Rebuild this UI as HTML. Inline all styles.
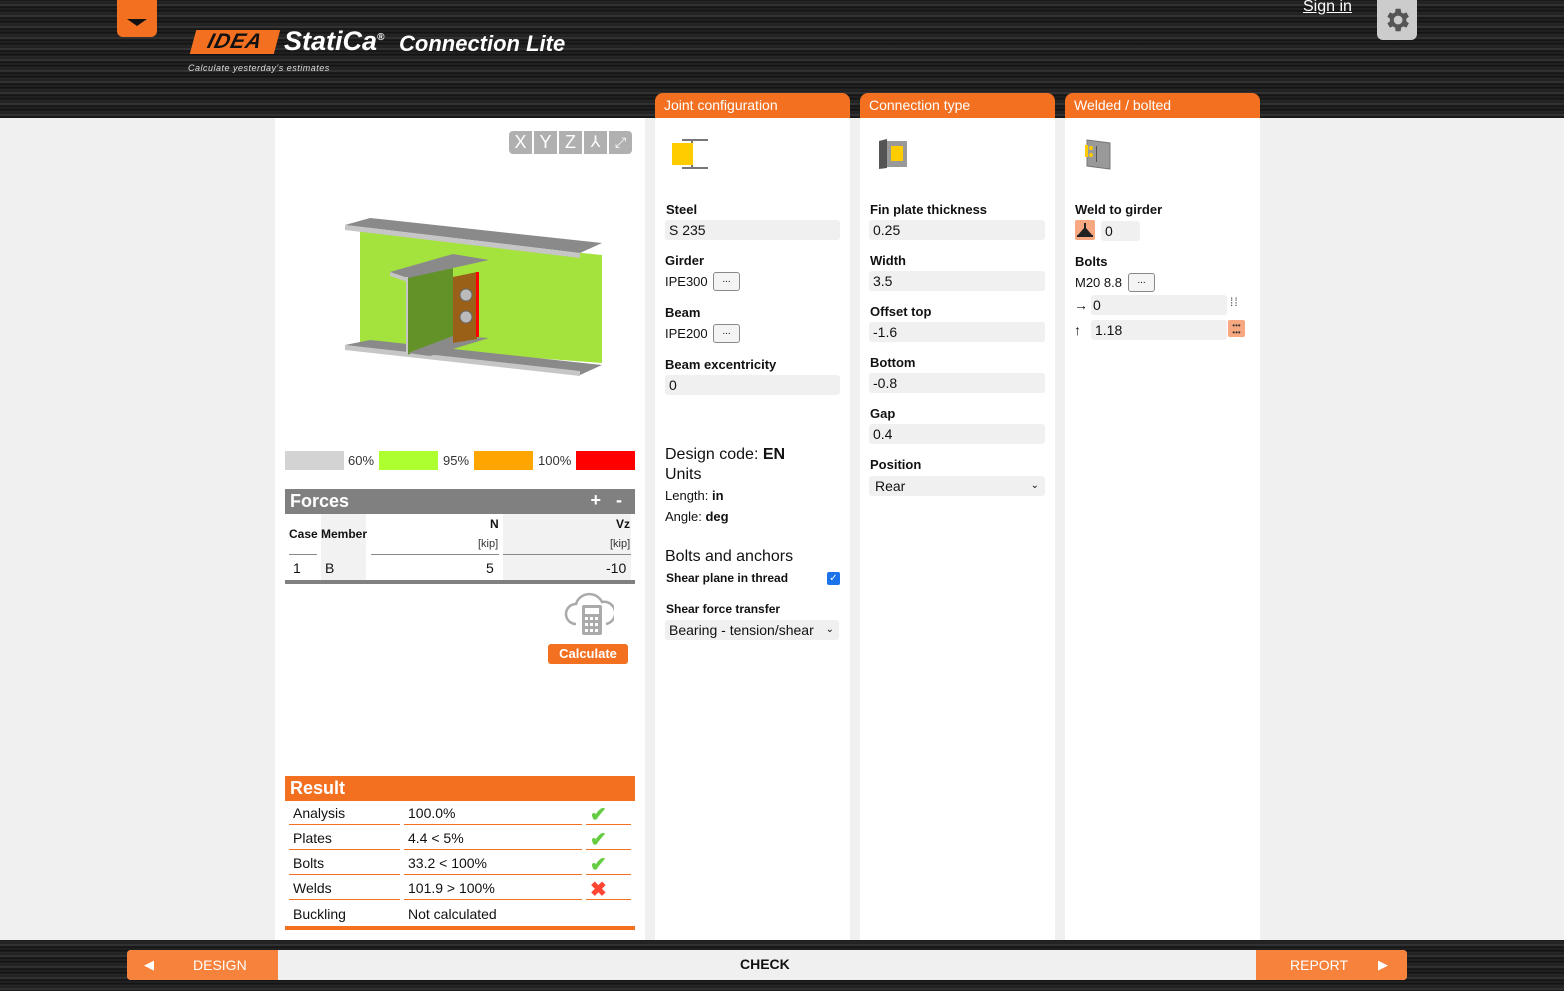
<!DOCTYPE html>
<html><head><meta charset="utf-8">
<style>
*{box-sizing:border-box;margin:0;padding:0}
body{width:1564px;height:991px;overflow:hidden;background:#f0f0f0;font-family:"Liberation Sans",Arial,sans-serif;color:#111;position:relative}
.dark{position:absolute;left:0;width:1564px;background:repeating-linear-gradient(180deg,#161616 0px,#2c2c2c 2px,#1a1a1a 3px,#3a3a3a 5px,#111 7px,#262626 9px,#0e0e0e 11px)}
.abs{position:absolute}
.panel{position:absolute;background:#fff;top:118px;height:822px}
.tab{position:absolute;top:93px;height:25px;background:#f37021;color:#fff;font-size:14px;padding:4px 9px;border-radius:8px 8px 0 0}
.lbl{position:absolute;font-size:13px;font-weight:bold}
.inp{position:absolute;background:#f0f0f0;height:20px;font-size:14px;padding:2px 4px;border-radius:3px}
.btn{position:absolute;width:27px;height:19px;border:1px solid #888;border-radius:3px;background:#f4f4f4;font-size:10px;text-align:center;line-height:14px}
.t{position:absolute;font-size:14px}
</style></head><body>
<div class="dark" style="top:0;height:118px"></div>
<div class="dark" style="top:940px;height:51px"></div>
<div class="abs" style="left:117px;top:0;width:40px;height:37px;background:#f37021;border-radius:0 0 6px 6px"></div>
<div class="abs" style="left:127px;top:19px;width:0;height:0;border-left:10px solid transparent;border-right:10px solid transparent;border-top:7px solid #111"></div>
<div class="abs" style="left:193px;top:30px;width:84px;height:24px;background:#f37021;transform:skewX(-15deg);color:#111;font:italic bold 21px 'Liberation Sans';line-height:24px;text-align:center;letter-spacing:1px">IDEA</div>
<div class="abs" style="left:284px;top:26px;color:#fff;font:italic bold 27px 'Liberation Sans'">StatiCa<sup style="font-size:10px">®</sup></div>
<div class="abs" style="left:399px;top:31px;color:#fff;font:italic bold 22px 'Liberation Sans'">Connection Lite</div>
<div class="abs" style="left:188px;top:63px;color:#ddd;font:italic 9px 'Liberation Sans';letter-spacing:.5px">Calculate yesterday's estimates</div>
<div class="abs" style="left:1303px;top:-2px;color:#fff;font-size:16px;text-decoration:underline">Sign in</div>
<div class="abs" style="left:1377px;top:0;width:40px;height:40px;background:#ccc;border-radius:0 0 6px 6px"></div>
<svg class="abs" style="left:1382px;top:5px" width="30" height="30" viewBox="0 0 24 24"><path fill="#555" d="M19.4 13a7.5 7.5 0 000-2l2.1-1.6-2-3.5-2.5 1a7 7 0 00-1.7-1L14.9 3h-4l-.4 2.9a7 7 0 00-1.7 1l-2.5-1-2 3.5L6.4 11a7.5 7.5 0 000 2l-2.1 1.6 2 3.5 2.5-1a7 7 0 001.7 1l.4 2.9h4l.4-2.9a7 7 0 001.7-1l2.5 1 2-3.5zM12.9 15.5a3.5 3.5 0 110-7 3.5 3.5 0 010 7z"/></svg>

<div class="panel" style="left:275px;width:370px"></div>
<div class="panel" style="left:655px;width:195px"></div>
<div class="panel" style="left:860px;width:195px"></div>
<div class="panel" style="left:1065px;width:195px"></div>
<div class="tab" style="left:655px;width:195px">Joint configuration</div>
<div class="tab" style="left:860px;width:195px">Connection type</div>
<div class="tab" style="left:1065px;width:195px">Welded / bolted</div>

<div class="abs" style="left:509px;top:131px;display:flex;gap:2px">
<div style="width:23px;height:23px;background:#b0b0b0;color:#fff;font-size:18px;text-align:center;line-height:23px;border-radius:4px 0 0 4px">X</div>
<div style="width:23px;height:23px;background:#b0b0b0;color:#fff;font-size:18px;text-align:center;line-height:23px">Y</div>
<div style="width:23px;height:23px;background:#b0b0b0;color:#fff;font-size:18px;text-align:center;line-height:23px">Z</div>
<div style="width:23px;height:23px;background:#b0b0b0;color:#fff;font-size:16px;text-align:center;line-height:23px">⅄</div>
<div style="width:23px;height:23px;background:#b0b0b0;color:#fff;font-size:14px;text-align:center;line-height:23px;border-radius:0 4px 4px 0">⤢</div>
</div>
<svg class="abs" style="left:340px;top:215px" width="270" height="165" viewBox="0 0 270 165">
<polygon points="20,16 262,40 262,148 20,130" fill="#a4e23e"/>
<polygon points="5,10 30,3 262,28 240,38" fill="#8a8a8a"/>
<polygon points="5,10 240,38 240,43 5,15" fill="#c6c6c6"/>
<polygon points="5,130 30,125 262,150 240,160" fill="#8a8a8a"/>
<polygon points="5,130 240,156 240,161 5,135" fill="#c6c6c6"/>
<polygon points="67,60 67,140 113,123 113,53" fill="#639328"/>
<polygon points="68,138 113,121 149,123 90,141" fill="#8a8a8a"/>
<polygon points="50,57 113,39 149,45 68,63" fill="#8a8a8a"/>
<polygon points="50,57 68,63 68,67 50,61" fill="#c6c6c6"/>
<rect x="66" y="62" width="2" height="78" fill="#c6c6c6"/>
<polygon points="113,62 137,57 137,124 113,128" fill="#9a6018"/>
<rect x="136" y="57" width="3" height="65" fill="#f00"/>
<circle cx="126" cy="80" r="6" fill="#bbb" stroke="#666"/>
<circle cx="126" cy="102" r="6" fill="#bbb" stroke="#666"/>
</svg>
<div class="abs" style="left:285px;top:451px;width:59px;height:19px;background:#d3d3d3"></div>
<div class="t" style="left:348px;top:453px;font-size:13px;color:#333">60%</div>
<div class="abs" style="left:379px;top:451px;width:59px;height:19px;background:#adff2f"></div>
<div class="t" style="left:443px;top:453px;font-size:13px;color:#333">95%</div>
<div class="abs" style="left:474px;top:451px;width:59px;height:19px;background:#ffa500"></div>
<div class="t" style="left:538px;top:453px;font-size:13px;color:#333">100%</div>
<div class="abs" style="left:576px;top:451px;width:59px;height:19px;background:#f00"></div>

<div class="abs" style="left:285px;top:489px;width:350px;height:25px;background:#808080;color:#fff;font-weight:bold;font-size:18px;padding:2px 5px">Forces<span style="position:absolute;right:13px;top:1px">+ &nbsp;&nbsp;-</span></div>
<div class="abs" style="left:321px;top:514px;width:45px;height:66px;background:#f2f2f2"></div>
<div class="abs" style="left:503px;top:514px;width:128px;height:66px;background:#f2f2f2"></div>
<div class="lbl" style="left:289px;top:527px;font-size:12px">Case</div>
<div class="lbl" style="left:321px;top:527px;font-size:12px">Member</div>
<div class="lbl" style="left:490px;top:517px;font-size:12px">N</div>
<div class="t" style="left:478px;top:538px;font-size:11px;color:#333">[kip]</div>
<div class="lbl" style="left:616px;top:517px;font-size:12px">Vz</div>
<div class="t" style="left:610px;top:538px;font-size:11px;color:#333">[kip]</div>
<div class="abs" style="left:289px;top:554px;width:28px;height:1px;background:#888"></div>
<div class="abs" style="left:371px;top:554px;width:128px;height:1px;background:#888"></div>
<div class="abs" style="left:503px;top:554px;width:128px;height:1px;background:#888"></div>
<div class="t" style="left:293px;top:560px">1</div>
<div class="t" style="left:325px;top:560px">B</div>
<div class="t" style="left:486px;top:560px">5</div>
<div class="t" style="left:606px;top:560px">-10</div>
<div class="abs" style="left:285px;top:580px;width:350px;height:4px;background:#808080"></div>
<svg class="abs" style="left:562px;top:592px" width="52" height="45" viewBox="0 0 52 45"><path d="M14 32a10 10 0 010-20 14 14 0 0126-2 10 10 0 014 22" fill="none" stroke="#aaa" stroke-width="2.5"/><rect x="20" y="13" width="20" height="30" rx="2" fill="#aaa"/><rect x="23" y="16" width="14" height="6" fill="#fff"/><g fill="#fff"><rect x="23" y="25" width="3" height="3"/><rect x="28" y="25" width="3" height="3"/><rect x="33" y="25" width="3" height="3"/><rect x="23" y="31" width="3" height="3"/><rect x="28" y="31" width="3" height="3"/><rect x="33" y="31" width="3" height="3"/><rect x="23" y="37" width="3" height="3"/><rect x="28" y="37" width="3" height="3"/><rect x="33" y="37" width="3" height="3"/></g></svg>
<div class="abs" style="left:548px;top:644px;width:80px;height:20px;background:#f37021;color:#fff;font-weight:bold;font-size:13px;text-align:center;line-height:20px;border-radius:3px">Calculate</div>

<div class="abs" style="left:285px;top:776px;width:350px;height:25px;background:#f37021;color:#fff;font-weight:bold;font-size:18px;padding:2px 5px">Result</div>
<div class="t" style="left:293px;top:805px">Analysis</div><div class="t" style="left:408px;top:805px">100.0%</div>
<div class="t" style="left:293px;top:830px">Plates</div><div class="t" style="left:408px;top:830px">4.4 &lt; 5%</div>
<div class="t" style="left:293px;top:855px">Bolts</div><div class="t" style="left:408px;top:855px">33.2 &lt; 100%</div>
<div class="t" style="left:293px;top:880px">Welds</div><div class="t" style="left:408px;top:880px">101.9 &gt; 100%</div>
<div class="t" style="left:293px;top:906px">Buckling</div><div class="t" style="left:408px;top:906px">Not calculated</div>
<div class="abs" style="left:289px;top:824px;width:111px;height:1px;background:#f37021;box-shadow:0 25px 0 #f37021,0 50px 0 #f37021,0 75px 0 #f37021"></div>
<div class="abs" style="left:404px;top:824px;width:178px;height:1px;background:#f37021;box-shadow:0 25px 0 #f37021,0 50px 0 #f37021,0 75px 0 #f37021"></div>
<div class="abs" style="left:586px;top:824px;width:45px;height:1px;background:#f37021;box-shadow:0 25px 0 #f37021,0 50px 0 #f37021,0 75px 0 #f37021"></div>
<div class="t" style="left:590px;top:802px;color:#6c4;font-size:20px;font-weight:bold">✔</div>
<div class="t" style="left:590px;top:827px;color:#6c4;font-size:20px;font-weight:bold">✔</div>
<div class="t" style="left:590px;top:852px;color:#6c4;font-size:20px;font-weight:bold">✔</div>
<div class="t" style="left:590px;top:877px;color:#f43;font-size:20px;font-weight:bold">✖</div>
<div class="abs" style="left:285px;top:926px;width:350px;height:4px;background:#f37021"></div>

<svg class="abs" style="left:672px;top:139px" width="36" height="31"><rect x="10" y="0" width="26" height="2" fill="#777"/><rect x="10" y="28" width="26" height="2" fill="#777"/><rect x="19" y="0" width="2" height="30" fill="#777"/><rect x="0" y="4" width="21" height="22" fill="#fc0"/></svg>
<div class="lbl" style="left:666px;top:202px">Steel</div>
<div class="inp" style="left:665px;top:220px;width:175px">S 235</div>
<div class="lbl" style="left:665px;top:253px">Girder</div>
<div class="t" style="left:665px;top:274px;font-size:13px">IPE300</div><div class="btn" style="left:713px;top:272px">...</div>
<div class="lbl" style="left:665px;top:305px">Beam</div>
<div class="t" style="left:665px;top:326px;font-size:13px">IPE200</div><div class="btn" style="left:713px;top:324px">...</div>
<div class="lbl" style="left:665px;top:357px">Beam excentricity</div>
<div class="inp" style="left:665px;top:375px;width:175px">0</div>
<div class="t" style="left:665px;top:446px;font-size:16px">Design code: <b>EN</b></div>
<div class="t" style="left:665px;top:466px;font-size:16px">Units</div>
<div class="t" style="left:665px;top:488px;font-size:13px">Length: <b>in</b></div>
<div class="t" style="left:665px;top:509px;font-size:13px">Angle: <b>deg</b></div>
<div class="t" style="left:665px;top:548px;font-size:16px">Bolts and anchors</div>
<div class="lbl" style="left:666px;top:571px;font-size:12px">Shear plane in thread</div>
<div class="abs" style="left:827px;top:572px;width:13px;height:13px;background:#1a73e8;border-radius:2px;color:#fff;font-size:10px;text-align:center;line-height:13px">✓</div>
<div class="lbl" style="left:666px;top:602px;font-size:12px">Shear force transfer</div>
<div class="inp" style="left:665px;top:620px;width:174px;font-size:14px">Bearing - tension/shear<span style="position:absolute;right:5px;font-size:10px;top:4px">⌄</span></div>

<svg class="abs" style="left:879px;top:138px" width="32" height="32"><polygon points="0,3 8,1 8,30 0,31" fill="#555"/><rect x="8" y="3" width="20" height="26" fill="#999"/><rect x="12" y="8" width="12" height="15" fill="#fc0"/></svg>
<div class="lbl" style="left:870px;top:202px">Fin plate thickness</div>
<div class="inp" style="left:869px;top:220px;width:176px">0.25</div>
<div class="lbl" style="left:870px;top:253px">Width</div>
<div class="inp" style="left:869px;top:271px;width:176px">3.5</div>
<div class="lbl" style="left:870px;top:304px">Offset top</div>
<div class="inp" style="left:869px;top:322px;width:176px">-1.6</div>
<div class="lbl" style="left:870px;top:355px">Bottom</div>
<div class="inp" style="left:869px;top:373px;width:176px">-0.8</div>
<div class="lbl" style="left:870px;top:406px">Gap</div>
<div class="inp" style="left:869px;top:424px;width:176px">0.4</div>
<div class="lbl" style="left:870px;top:457px">Position</div>
<div class="inp" style="left:869px;top:476px;width:176px;padding-left:6px">Rear<span style="position:absolute;right:6px;font-size:10px;top:4px">⌄</span></div>

<svg class="abs" style="left:1084px;top:138px" width="30" height="32"><polygon points="3,2 26,5 26,31 3,28" fill="#999" stroke="#777"/><rect x="1" y="7" width="3" height="12" fill="#fc0"/><circle cx="7" cy="10" r="2" fill="#fc0"/><circle cx="7" cy="17" r="2" fill="#fc0"/><rect x="12" y="8" width="1" height="16" fill="#555"/></svg>
<div class="lbl" style="left:1075px;top:202px">Weld to girder</div>
<div class="abs" style="left:1075px;top:220px;width:20px;height:20px;background:#f8a880;border-radius:2px"></div>
<svg class="abs" style="left:1075px;top:220px" width="20" height="20"><rect x="9" y="3" width="2" height="12" fill="#222"/><polygon points="3,15 9,8 9,15" fill="#222"/><polygon points="11,8 17,15 11,15" fill="#222"/><rect x="2" y="15" width="16" height="2" fill="#222"/></svg>
<div class="inp" style="left:1101px;top:221px;width:39px">0</div>
<div class="lbl" style="left:1075px;top:254px">Bolts</div>
<div class="t" style="left:1075px;top:275px;font-size:13px">M20 8.8</div><div class="btn" style="left:1128px;top:273px">...</div>
<div class="t" style="left:1074px;top:297px">→</div>
<div class="inp" style="left:1091px;top:295px;width:136px;padding-left:2px">0</div>
<div class="t" style="left:1230px;top:296px;font-size:12px;letter-spacing:1px;color:#444;line-height:12px">⁞⁞</div>
<div class="t" style="left:1074px;top:322px">↑</div>
<div class="inp" style="left:1091px;top:320px;width:136px">1.18</div>
<div class="abs" style="left:1228px;top:320px;width:17px;height:17px;background:#f8a880;border-radius:2px;font-size:8px;text-align:center;line-height:7px;padding-top:2px;color:#333">•••<br>•••</div>

<div class="abs" style="left:127px;top:950px;width:1280px;height:30px;background:#f0f0f0;border-radius:4px"></div>
<div class="abs" style="left:127px;top:950px;width:151px;height:30px;background:#f6823b;border-radius:4px 0 0 4px;color:#fff;font-size:14px;line-height:30px"><span style="position:absolute;left:17px;font-size:13px">◀</span><span style="position:absolute;left:66px">DESIGN</span></div>
<div class="abs" style="left:1256px;top:950px;width:151px;height:30px;background:#f6823b;border-radius:0 4px 4px 0;color:#fff;font-size:14px;line-height:30px"><span style="position:absolute;left:34px">REPORT</span><span style="position:absolute;left:122px;font-size:13px">▶</span></div>
<div class="abs" style="left:740px;top:956px;font-size:14px;font-weight:bold">CHECK</div>
</body></html>
